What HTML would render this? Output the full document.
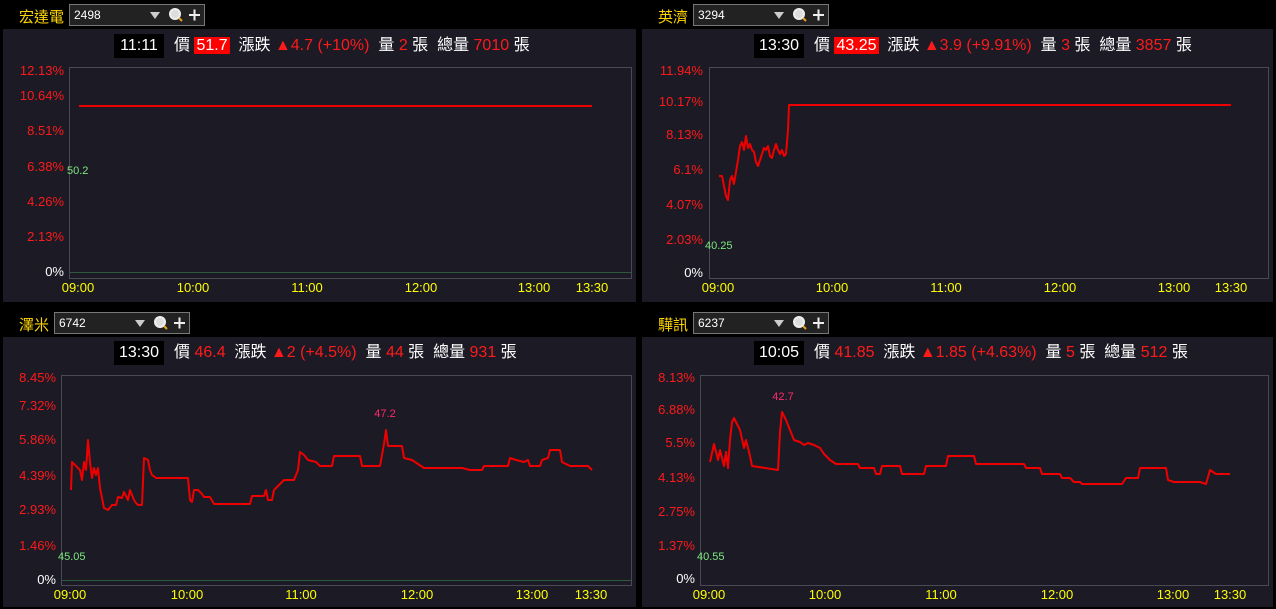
<!DOCTYPE html>
<html><head><meta charset="utf-8"><style>
body{margin:0;width:1276px;height:609px;background:#000;overflow:hidden;font-family:"Liberation Sans","Noto Sans CJK TC",sans-serif;position:relative}
.panel{position:absolute;background:#1b1a25}
.name{position:absolute;color:#ffd700;font-size:15px}
.inp{position:absolute;width:134px;height:20px;border:1px solid #777;background:#222;color:#fff;font-size:12px;line-height:20px;box-sizing:content-box}
.inp span{position:absolute;left:4px}
.info{position:absolute;height:22px;font-size:16px;color:#fff;white-space:nowrap;line-height:22px}
.info .t{background:#000;display:inline-block;padding:0 5px;width:40px;text-align:center;margin-right:10px;line-height:24px}
.info .r{color:#ff1a1a}
.info .pb{background:#f00;color:#fff;padding:0 2px}
svg{position:absolute;left:0;top:0}
</style></head><body>
<div class="panel" style="left:3px;top:29px;width:633px;height:273px"></div>
<div class="panel" style="left:642px;top:29px;width:631px;height:273px"></div>
<div class="panel" style="left:3px;top:337px;width:633px;height:270px"></div>
<div class="panel" style="left:642px;top:337px;width:631px;height:270px"></div>

<div class="name" style="left:19px;top:6px">宏達電</div>
<div class="inp" style="left:69px;top:4px"><span>2498</span></div>
<div class="name" style="left:658px;top:6px">英濟</div>
<div class="inp" style="left:693px;top:4px"><span>3294</span></div>
<div class="name" style="left:19px;top:314px">澤米</div>
<div class="inp" style="left:54px;top:312px"><span>6742</span></div>
<div class="name" style="left:658px;top:314px">驊訊</div>
<div class="inp" style="left:693px;top:312px"><span>6237</span></div>

<div class="info" style="left:114px;top:34px"><span class="t">11:11</span>價 <span class="pb">51.7</span>&nbsp; 漲跌 <span class="r">▲4.7 (+10%)</span>&nbsp; 量 <span class="r">2</span> 張&nbsp; 總量 <span class="r">7010</span> 張</div>
<div class="info" style="left:754px;top:34px"><span class="t">13:30</span>價 <span class="pb">43.25</span>&nbsp; 漲跌 <span class="r">▲3.9 (+9.91%)</span>&nbsp; 量 <span class="r">3</span> 張&nbsp; 總量 <span class="r">3857</span> 張</div>
<div class="info" style="left:114px;top:341px"><span class="t">13:30</span>價 <span class="r">46.4</span>&nbsp; 漲跌 <span class="r">▲2 (+4.5%)</span>&nbsp; 量 <span class="r">44</span> 張&nbsp; 總量 <span class="r">931</span> 張</div>
<div class="info" style="left:754px;top:341px"><span class="t">10:05</span>價 <span class="r">41.85</span>&nbsp; 漲跌 <span class="r">▲1.85 (+4.63%)</span>&nbsp; 量 <span class="r">5</span> 張&nbsp; 總量 <span class="r">512</span> 張</div>

<svg width="1276" height="609" font-family="Liberation Sans, sans-serif" font-size="13">
<g fill="#ccc"><path d="M150,12h10l-5,7z"/><path d="M774,12h10l-5,7z"/><path d="M135,320h10l-5,7z"/><path d="M774,320h10l-5,7z"/></g>
<g fill="none" stroke="#eee" stroke-width="2">
<circle cx="175" cy="14" r="5" fill="#ddd"/><circle cx="799" cy="14" r="5" fill="#ddd"/><circle cx="160" cy="322" r="5" fill="#ddd"/><circle cx="799" cy="322" r="5" fill="#ddd"/>
<path d="M189,15h11M194.5,9.5v11M813,15h11M818.5,9.5v11M174,323h11M179.5,317.5v11M813,323h11M818.5,317.5v11"/>
</g>
<g stroke="#e8a020" stroke-width="2"><path d="M179,18l3,3M803,18l3,3M164,326l3,3M803,326l3,3"/></g>

<g fill="none" stroke="#4a4a55"><rect x="69.5" y="67.5" width="562" height="211"/><rect x="709.5" y="67.5" width="559" height="211"/><rect x="61.5" y="375.5" width="570" height="210"/><rect x="700.5" y="375.5" width="568" height="210"/></g>
<g stroke="#2d5a3d"><path d="M70,272.5h561M62,580.5h569"/></g>

<g fill="#ff1a1a" text-anchor="end">
<text x="64" y="75">12.13%</text><text x="64" y="100">10.64%</text><text x="64" y="135">8.51%</text><text x="64" y="171">6.38%</text><text x="64" y="206">4.26%</text><text x="64" y="241">2.13%</text>
<text x="703" y="75">11.94%</text><text x="703" y="106">10.17%</text><text x="703" y="139">8.13%</text><text x="703" y="174">6.1%</text><text x="703" y="209">4.07%</text><text x="703" y="244">2.03%</text>
<text x="56" y="382">8.45%</text><text x="56" y="410">7.32%</text><text x="56" y="444">5.86%</text><text x="56" y="480">4.39%</text><text x="56" y="514">2.93%</text><text x="56" y="550">1.46%</text>
<text x="695" y="382">8.13%</text><text x="695" y="414">6.88%</text><text x="695" y="447">5.5%</text><text x="695" y="482">4.13%</text><text x="695" y="516">2.75%</text><text x="695" y="550">1.37%</text>
</g>
<g fill="#fff" text-anchor="end"><text x="64" y="276">0%</text><text x="703" y="277">0%</text><text x="56" y="584">0%</text><text x="695" y="583">0%</text></g>
<g fill="#7ee87e" font-size="11"><text x="67" y="174">50.2</text><text x="705" y="249">40.25</text><text x="58" y="560">45.05</text><text x="697" y="560">40.55</text></g>
<g fill="#ff2a6a" font-size="11" text-anchor="middle"><text x="385" y="417">47.2</text><text x="783" y="400">42.7</text></g>
<g fill="#ffff00" text-anchor="middle">
<text x="78" y="292">09:00</text><text x="193" y="292">10:00</text><text x="307" y="292">11:00</text><text x="421" y="292">12:00</text><text x="534" y="292">13:00</text><text x="592" y="292">13:30</text>
<text x="718" y="292">09:00</text><text x="832" y="292">10:00</text><text x="946" y="292">11:00</text><text x="1060" y="292">12:00</text><text x="1174" y="292">13:00</text><text x="1231" y="292">13:30</text>
<text x="70" y="599">09:00</text><text x="187" y="599">10:00</text><text x="301" y="599">11:00</text><text x="417" y="599">12:00</text><text x="532" y="599">13:00</text><text x="591" y="599">13:30</text>
<text x="709" y="599">09:00</text><text x="825" y="599">10:00</text><text x="941" y="599">11:00</text><text x="1057" y="599">12:00</text><text x="1173" y="599">13:00</text><text x="1230" y="599">13:30</text>
</g>
<g fill="none" stroke="#ee0000" stroke-width="2" stroke-linejoin="round">
<path d="M79,106H592"/>
<path d="M719,176L722,176 724,186 726,196 728,200 730,180 732,176 734,184 736,172 738,160 740,146 742,142 744,150 746,136 748,148 750,144 752,150 754,152 756,162 758,166 760,160 762,154 764,148 766,150 768,146 770,156 772,158 774,150 776,144 778,150 780,154 782,150 784,156 786,154 788,130 789,105 1231,105"/>
<path d="M71,490L72,462 76,466 80,470 82,480 84,462 86,470 88,440 90,462 92,478 94,468 96,475 98,468 100,488 104,508 108,510 112,505 116,505 118,497 122,498 124,492 128,500 130,490 134,500 136,503 138,505 142,505 144,458 148,460 150,470 152,475 156,478 188,478 190,500 192,502 194,490 198,490 202,494 204,497 210,497 214,504 250,504 252,496 264,496 266,490 268,500 272,500 274,490 284,480 294,480 298,470 300,452 304,455 308,460 316,462 320,466 332,466 334,456 360,456 362,466 380,466 384,444 386,430 388,446 402,446 404,458 412,460 424,468 462,468 470,470 482,470 484,466 508,466 510,458 516,460 524,462 528,460 530,466 540,466 542,460 548,458 550,450 560,450 562,462 570,466 588,466 592,470"/>
<path d="M710,462L714,444 718,460 720,450 724,466 726,452 728,468 730,440 732,422 734,418 736,422 740,430 744,448 746,440 750,456 752,466 778,470 780,432 782,412 786,420 790,430 794,440 800,442 804,445 808,443 814,445 820,448 824,454 830,460 836,464 858,464 860,468 874,468 876,474 880,474 882,466 900,466 902,474 924,474 926,466 946,466 948,456 974,456 976,464 1024,464 1026,468 1040,468 1042,474 1060,474 1062,478 1070,478 1074,482 1080,482 1082,484 1122,484 1126,478 1138,478 1140,468 1166,468 1168,480 1174,482 1184,482 1190,482 1200,482 1206,484 1210,470 1216,474 1230,474"/>
</g>
</svg>
</body></html>
